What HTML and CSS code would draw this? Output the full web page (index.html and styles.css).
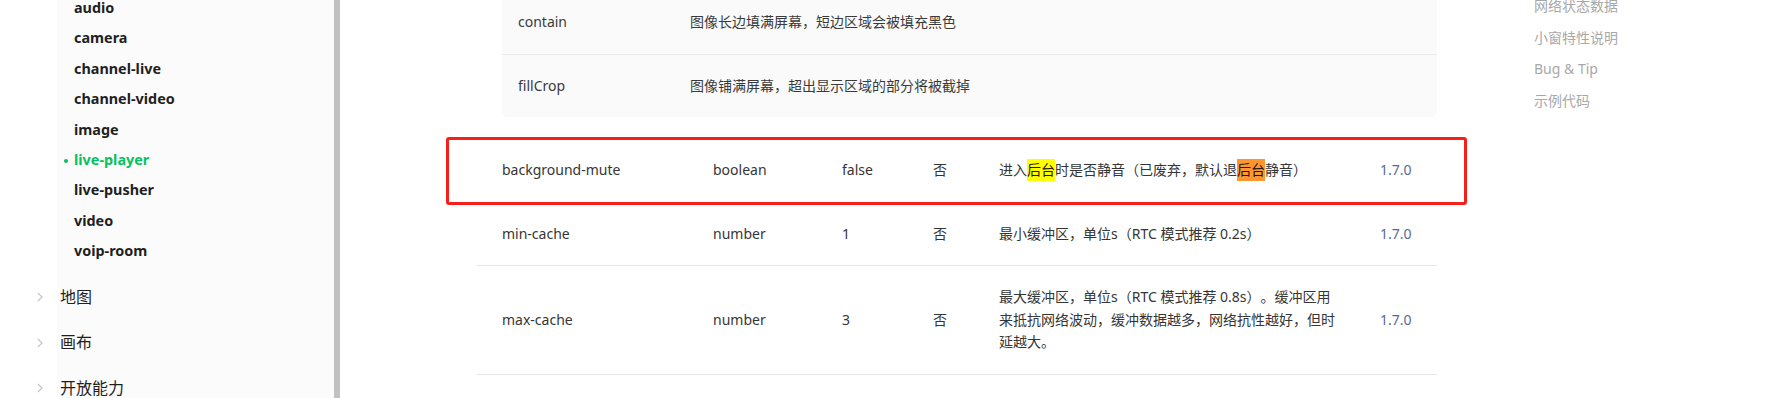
FILE: index.html
```html
<!DOCTYPE html>
<html lang="zh-CN">
<head>
<meta charset="utf-8">
<title>live-player</title>
<link rel="stylesheet" href="styles.css">
</head>
<body>
<div class="page">
  <aside class="sidebar">
    <div class="side-inner">
      <ul class="sub-list">
        <li>audio</li>
        <li>camera</li>
        <li>channel-live</li>
        <li>channel-video</li>
        <li>image</li>
        <li class="active">live-player</li>
        <li>live-pusher</li>
        <li>video</li>
        <li>voip-room</li>
      </ul>
      <ul class="group-list">
        <li><span class="chev"><svg width="6" height="10" viewBox="0 0 6 10"><path d="M1 1l4 4-4 4" fill="none" stroke="#c4c4c4" stroke-width="1.1"/></svg></span>地图</li>
        <li><span class="chev"><svg width="6" height="10" viewBox="0 0 6 10"><path d="M1 1l4 4-4 4" fill="none" stroke="#c4c4c4" stroke-width="1.1"/></svg></span>画布</li>
        <li><span class="chev"><svg width="6" height="10" viewBox="0 0 6 10"><path d="M1 1l4 4-4 4" fill="none" stroke="#c4c4c4" stroke-width="1.1"/></svg></span>开放能力</li>
      </ul>
    </div>
    <div class="scrollbar"></div>
  </aside>

  <main class="content">
    <table class="attr-table">
      <colgroup>
        <col class="c1"><col class="c2"><col class="c3"><col class="c4"><col class="c5"><col class="c6">
      </colgroup>
      <tbody>
        <tr class="nested-row">
          <td colspan="6">
            <div class="nested">
              <div class="n-row"><span class="n-key">contain</span><span>图像长边填满屏幕，短边区域会被填充黑色</span></div>
              <div class="n-row"><span class="n-key">fillCrop</span><span>图像铺满屏幕，超出显示区域的部分将被截掉</span></div>
            </div>
          </td>
        </tr>
        <tr class="marked">
          <td>background-mute</td>
          <td>boolean</td>
          <td>false</td>
          <td>否</td>
          <td>进入<mark class="hl">后台</mark>时是否静音（已废弃，默认退<mark class="hl cur">后台</mark>静音）</td>
          <td class="ver">1.7.0</td>
        </tr>
        <tr>
          <td>min-cache</td>
          <td>number</td>
          <td>1</td>
          <td>否</td>
          <td>最小缓冲区，单位s（RTC 模式推荐 0.2s）</td>
          <td class="ver">1.7.0</td>
        </tr>
        <tr>
          <td>max-cache</td>
          <td>number</td>
          <td>3</td>
          <td>否</td>
          <td>最大缓冲区，单位s（RTC 模式推荐 0.8s）。缓冲区用来抵抗网络波动，缓冲数据越多，网络抗性越好，但时延越大。</td>
          <td class="ver">1.7.0</td>
        </tr>
      </tbody>
    </table>
    <div class="annot"></div>
  </main>

  <nav class="toc">
    <ul>
      <li>网络状态数据</li>
      <li>小窗特性说明</li>
      <li>Bug &amp; Tip</li>
      <li>示例代码</li>
    </ul>
  </nav>
</div>
</body>
</html>
```

FILE: styles.css
```css
html, body {
  margin: 0;
  padding: 0;
  background: #fff;
  overflow: hidden;
}
body {
  font-family: "Noto Sans", "Noto Sans CJK SC", sans-serif;
  color: #353535;
  width: 1784px;
  height: 398px;
  text-spacing-trim: space-all;
}
ul { list-style: none; margin: 0; padding: 0; }

.page {
  display: flex;
  height: 398px;
  overflow: hidden;
}

/* ---------- sidebar ---------- */
.sidebar {
  width: 340px;
  flex: none;
  display: flex;
  height: 398px;
  overflow: hidden;
}
.side-inner {
  width: 334px;
  background: linear-gradient(to right, #fff 0, #fff 57px, #fbfbfb 57px);
}
.scrollbar {
  width: 6px;
  background: #c1c1c1;
}
.sub-list {
  margin-top: -7px;
  padding-left: 74px;
}
.sub-list li {
  height: 30.4px;
  line-height: 30.4px;
  font-size: 14.4px;
  font-weight: 700;
  color: #1f1f1f;
  position: relative;
}
.sub-list li.active {
  color: #07c160;
}
.sub-list li.active::before {
  content: "";
  position: absolute;
  left: -10px;
  top: 14px;
  width: 4px;
  height: 4px;
  border-radius: 50%;
  background: #07c160;
}
.group-list {
  margin-top: 8px;
}
.group-list li {
  height: 45.5px;
  line-height: 45.5px;
  font-size: 16px;
  color: #1f1f1f;
  display: flex;
  align-items: center;
  padding-left: 37px;
}
.chev {
  width: 23px;
  display: flex;
  align-items: center;
}

/* ---------- content ---------- */
.content {
  box-sizing: border-box;
  width: 1098px;
  flex: none;
  padding-left: 137px;
  position: relative;
}
.attr-table {
  width: 960px;
  border-collapse: collapse;
  table-layout: fixed;
  font-size: 14px;
  color: #353535;
}
.c1 { width: 211px; }
.c2 { width: 129px; }
.c3 { width: 91px; }
.c4 { width: 66px; }
.c5 { width: 381px; }
.c6 { width: 82px; }
.attr-table td {
  padding: 20px 10px 20px 25px;
  line-height: 22.5px;
  border-bottom: 1px solid #e6e6e6;
  vertical-align: middle;
  word-break: break-all;
}
.attr-table tr td:nth-child(5) { padding-right: 16px; }
.attr-table td.ver {
  color: #576b95;
}
.nested-row td {
  padding: 0 0 21px 25px;
}
.nested {
  margin-top: -9px;
  background: #fafafa;
  border-radius: 0 0 6px 6px;
}
.n-row {
  display: flex;
  height: 63px;
  align-items: center;
  padding-left: 16px;
  font-size: 14px;
  color: #3a3a3a;
}
.n-row + .n-row {
  border-top: 1px solid #ececec;
  height: 62px;
}
.n-key {
  width: 172px;
  flex: none;
}
.hl {
  background: #ffff00;
  color: #1a1a1a;
  padding: 1px 0 2px;
}
.hl.cur {
  background: #ff9632;
}
.annot {
  position: absolute;
  left: 106px;
  top: 137px;
  width: 1015px;
  height: 62px;
  border: 3px solid #f4201a;
  border-radius: 3px;
  pointer-events: none;
}

/* ---------- toc ---------- */
.toc {
  flex: 1;
  padding-left: 96px;
}
.toc ul {
  margin-top: -10px;
}
.toc li {
  height: 31.7px;
  line-height: 31.7px;
  font-size: 14px;
  color: #a8a8a8;
}
```
